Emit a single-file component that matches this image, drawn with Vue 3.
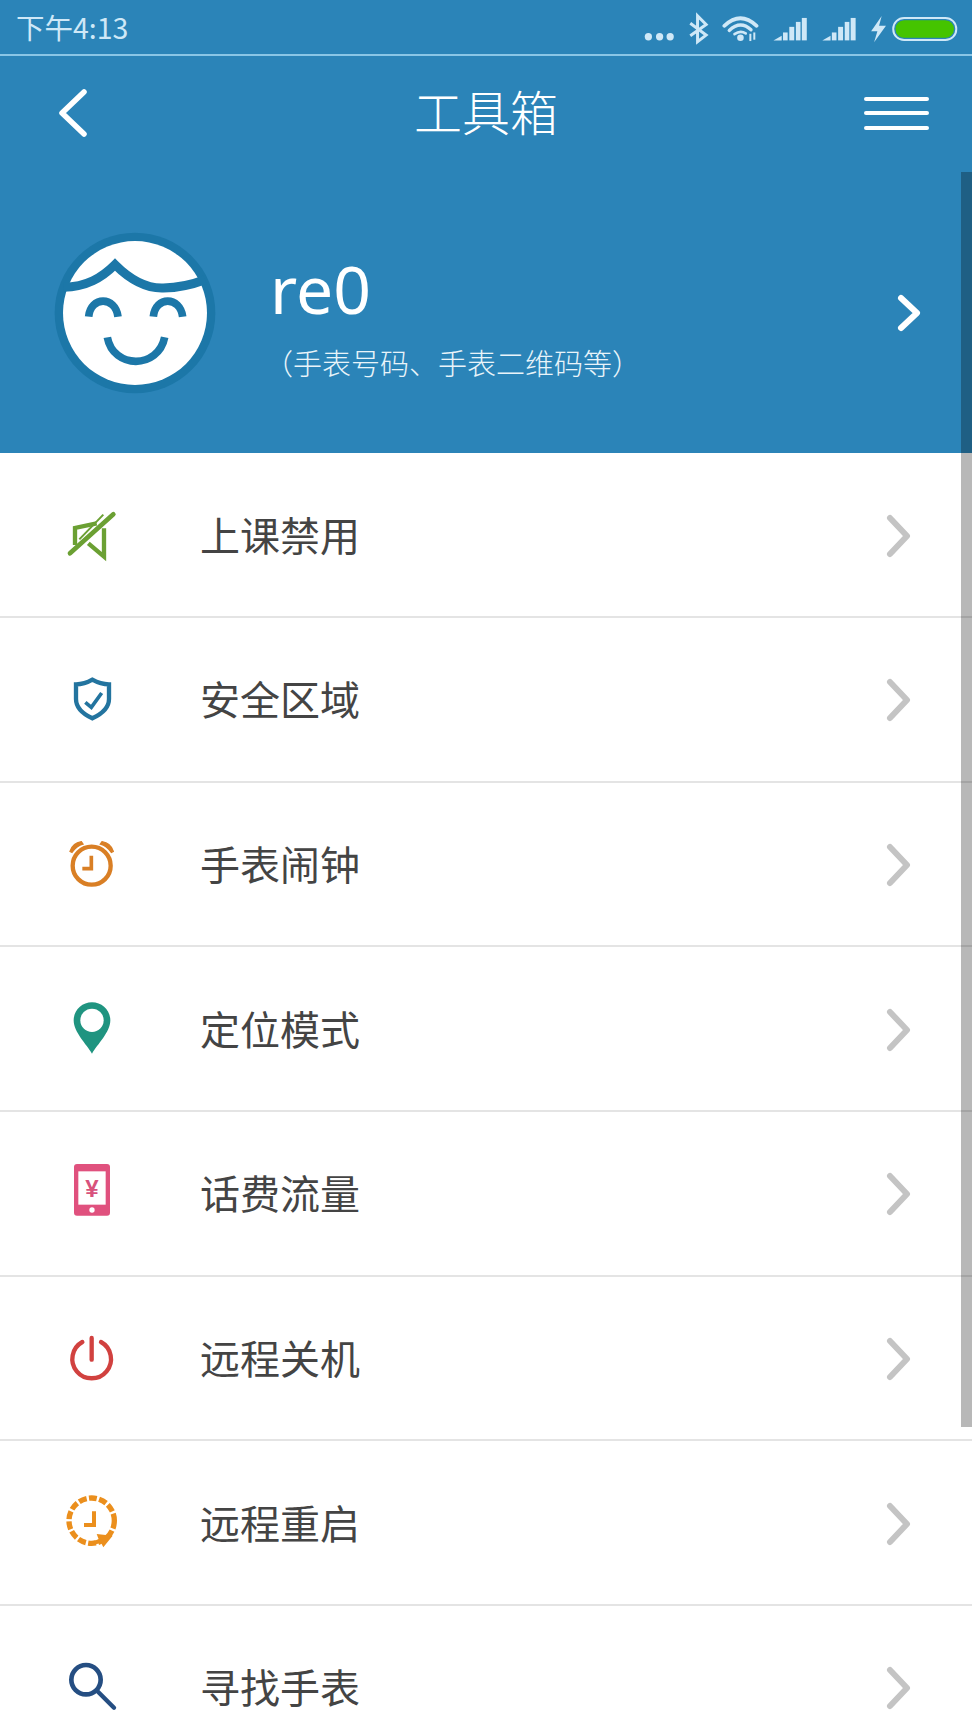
<script setup>
const rows = ['上课禁用', '安全区域', '手表闹钟', '定位模式', '话费流量', '远程关机', '远程重启', '寻找手表']
</script>

<template>
  <div class="app">
    <div class="status">
      <span class="time">下午4:13</span>
      <svg class="status-icons" viewBox="120 30 970 100" aria-hidden="true">
        <g fill="#cfe8f7">
          <circle cx="141" cy="105" r="11" /><circle cx="175" cy="105" r="11" /><circle cx="207" cy="105" r="11" />
        </g>
        <path d="M268 64 L316 100 L290 120 L290 42 L316 68 L268 102" fill="none" stroke="#cfe8f7" stroke-width="9" />
        <g fill="none" stroke="#cfe8f7" stroke-linecap="round">
          <path d="M371 72 Q420 26 469 72" stroke-width="11" />
          <path d="M386 86 Q420 54 452 84" stroke-width="10" />
          <path d="M402 97 Q420 84 436 95" stroke-width="8" />
        </g>
        <circle cx="420" cy="108" r="10" fill="#cfe8f7" />
        <g fill="#cfe8f7">
          <rect x="447" y="96" width="6" height="22" /><rect x="459" y="92" width="6" height="22" />
          <path d="M520 116 L545 102 L545 116 Z" /><rect x="549" y="92" width="14" height="24" /><rect x="568" y="75" width="15" height="41" /><rect x="588" y="60" width="14" height="56" /><rect x="606" y="48" width="15" height="68" />
          <path d="M668 116 L693 102 L693 116 Z" /><rect x="697" y="92" width="14" height="24" /><rect x="716" y="75" width="15" height="41" /><rect x="736" y="60" width="14" height="56" /><rect x="754" y="48" width="15" height="68" />
          <path d="M848 42 L816 88 L835 88 L825 122 L861 72 L840 72 Z" />
        </g>
        <rect x="883" y="48" width="191" height="67" rx="33" fill="none" stroke="#cfe8f7" stroke-width="6" />
        <rect x="890" y="55" width="177" height="53" rx="26" fill="#45c400" />
      </svg>
    </div>

    <header class="nav">
      <div class="nav-side">
        <svg class="back" viewBox="0 0 32 50" aria-hidden="true"><path d="M26 4 L4 25 L26 46" /></svg>
      </div>
      <h1 class="title">工具箱</h1>
      <div class="nav-side end">
        <div class="menu"><i></i><i></i><i></i></div>
      </div>
    </header>

    <section class="profile">
      <svg class="avatar" viewBox="72 66 486 486" aria-hidden="true">
        <circle cx="315" cy="309" r="241" fill="#1c77a8" />
        <circle cx="315" cy="309" r="216" fill="#fff" />
        <path d="M100 232 C170 230 215 204 255 164 C300 209 345 236 400 234 C440 233 480 226 525 209" fill="none" stroke="#1c77a8" stroke-width="27" />
        <g fill="none" stroke="#1c77a8" stroke-width="23">
          <path d="M176 320 C182 258 256 258 264 320" />
          <path d="M370 320 C376 258 450 258 458 320" />
          <path d="M232 382 C250 478 385 478 404 382" />
        </g>
      </svg>
      <div class="who">
        <div class="name">re0</div>
        <div class="sub">（手表号码、手表二维码等）</div>
      </div>
      <svg class="profile-arrow" viewBox="0 0 26 42" aria-hidden="true"><path d="M5 6 L21 21 L5 36" /></svg>
    </section>

    <ul class="list">
      <li v-for="(label, i) in rows" :key="label" class="row">
        <span class="icon">
          <svg v-if="i === 0" viewBox="36 45 180 180" aria-hidden="true">
            <path d="M140 100 L75 114 L75 165 M115 160 L162 200 L162 115" fill="none" stroke="#6ba033" stroke-width="13" />
            <path d="M60 190 L190 73" stroke="#6ba033" stroke-width="14" stroke-linecap="round" />
            <path d="M88 148 L160 74" stroke="#6ba033" stroke-width="6" />
          </svg>
          <svg v-else-if="i === 1" viewBox="36 540 180 180" aria-hidden="true">
            <path d="M127 572 C145 582 160 586 177 586 L177 630 C177 655 155 675 127 688 C99 675 78 655 78 630 L78 586 C95 586 110 582 127 572 Z" fill="none" stroke="#23749f" stroke-width="13" />
            <path d="M106 640 L124 655 L155 612" fill="none" stroke="#23749f" stroke-width="11" />
          </svg>
          <svg v-else-if="i === 2" viewBox="36 45 180 180" aria-hidden="true">
            <circle cx="125" cy="140" r="57" fill="none" stroke="#d97f25" stroke-width="13" />
            <path d="M124 110 L124 149 L97 149" fill="none" stroke="#d97f25" stroke-width="11" />
            <path d="M60 97 Q68 72 94 68 L99 75 Q80 80 66 100 Z M190 97 Q182 72 156 68 L151 75 Q170 80 184 100 Z" fill="#d97f25" stroke="#d97f25" stroke-width="4" />
          </svg>
          <svg v-else-if="i === 3" viewBox="36 540 180 180" aria-hidden="true">
            <path d="M126 704 C110 676 71 640 71 604 C71 574 96 550 126 550 C156 550 181 574 181 604 C181 640 142 676 126 704 Z" fill="#1f9480" />
            <circle cx="126" cy="604" r="35" fill="#fff" />
          </svg>
          <svg v-else-if="i === 4" viewBox="36 45 180 180" aria-hidden="true">
            <rect x="72" y="48" width="108" height="155" rx="9" fill="#e0517e" />
            <rect x="85" y="70" width="82" height="100" fill="#fff" />
            <circle cx="126" cy="186" r="8" fill="#fff" />
            <text x="126" y="146" text-anchor="middle" class="yen">¥</text>
          </svg>
          <svg v-else-if="i === 5" viewBox="36 540 180 180" aria-hidden="true">
            <path d="M97 582 A58 58 0 1 0 153 582" fill="none" stroke="#d1413f" stroke-width="13" stroke-linecap="round" />
            <path d="M125 570 L125 635" stroke="#d1413f" stroke-width="13" stroke-linecap="round" />
          </svg>
          <svg v-else-if="i === 6" viewBox="36 45 180 180" aria-hidden="true">
            <circle cx="125" cy="128" r="68" fill="none" stroke="#eb8f1d" stroke-width="16" stroke-dasharray="24 7" />
            <path d="M132 100 L132 141 L102 141" fill="none" stroke="#eb8f1d" stroke-width="12" />
            <path d="M188 173 L140 168 L146 184 L128 190 L134 200 L153 194 L160 208 Z" fill="#eb8f1d" />
          </svg>
          <svg v-else viewBox="36 537 180 180" aria-hidden="true">
            <circle cx="108" cy="605" r="44" fill="none" stroke="#254e82" stroke-width="14" />
            <path d="M141 638 L192 689" stroke="#254e82" stroke-width="13" stroke-linecap="round" />
          </svg>
        </span>
        <span class="label">{{ label }}</span>
        <svg class="row-arrow" viewBox="0 0 28 48" aria-hidden="true"><path d="M6 6 L23 24 L6 42" /></svg>
      </li>
    </ul>

    <div class="scrollbar"></div>
  </div>
</template>

<style>
html, body { margin: 0; overflow: hidden; background: #fff; }
</style>

<style scoped>
.app {
  position: relative;
  width: 972px;
  height: 1728px;
  overflow: hidden;
  background: #fff;
  font-family: "Noto Sans CJK SC", "Noto Sans", sans-serif;
}
.status {
  height: 54px;
  background: #2b84b8;
  border-bottom: 2px solid #8ac6e6;
  display: flex;
  align-items: center;
  justify-content: space-between;
  padding: 0 9px 0 16px;
  color: #cfe8f7;
}
.time { font-size: 28.5px; line-height: 54px; }
.status-icons { width: 323px; height: 33px; margin-top: 2px; }
.nav {
  height: 114px;
  background: #2b84b8;
  display: grid;
  grid-template-columns: 1fr auto 1fr;
  align-items: center;
  padding: 0 43px 0 58px;
}
.nav-side { display: flex; align-items: center; }
.nav-side.end { justify-content: flex-end; }
.back { width: 32px; height: 50px; fill: none; stroke: #fff; stroke-width: 5.5; stroke-linecap: round; stroke-linejoin: round; }
.title { margin: -6px 15px 0 0; font-size: 48px; font-weight: 300; color: #fff; line-height: 1; }
.menu { width: 65px; display: flex; flex-direction: column; gap: 10.5px; }
.menu i { display: block; height: 4px; background: #fff; border-radius: 2px; }
.profile {
  height: 283.3px;
  background: #2b84b8;
  display: flex;
  align-items: center;
  padding-left: 54px;
  padding-right: 50px;
  color: #fff;
}
.avatar { width: 162px; height: 162px; flex: none; margin-top: 2px; }
.who { flex: 1; margin-left: 54px; margin-top: 16px; }
.name { font-size: 66px; line-height: 70px; font-weight: 400; font-family: "Noto Sans", sans-serif; margin-top: -3px; }
.sub { font-size: 29px; line-height: 44px; font-weight: 300; margin-top: 17px; margin-left: -6px; color: #e9f4fa; }
.profile-arrow { width: 26px; height: 42px; flex: none; fill: none; stroke: #fff; stroke-width: 6; stroke-linecap: round; stroke-linejoin: round; margin-top: 2px; }
.list { list-style: none; margin: 0; padding: 0; }
.row {
  box-sizing: border-box;
  height: 164.7px;
  display: flex;
  align-items: center;
  padding-left: 62px;
  padding-right: 60px;
  border-bottom: 2px solid #e4e4e4;
}
.icon { width: 60px; height: 60px; flex: none; }
.icon svg { display: block; width: 60px; height: 60px; }
.yen { font-family: "Liberation Sans", sans-serif; font-weight: 700; font-size: 72px; fill: #d8527c; }
.label { flex: 1; margin-left: 78px; font-size: 40px; color: #444; font-weight: 400; line-height: 1; margin-top: -2px; }
.row-arrow { width: 28px; height: 48px; flex: none; fill: none; stroke: #c4c4c4; stroke-width: 6; stroke-linecap: round; stroke-linejoin: round; margin-top: 2px; }
.scrollbar {
  position: absolute;
  right: 0;
  top: 172px;
  width: 11px;
  height: 1255px;
  background: rgba(0, 0, 0, 0.28);
}
</style>
